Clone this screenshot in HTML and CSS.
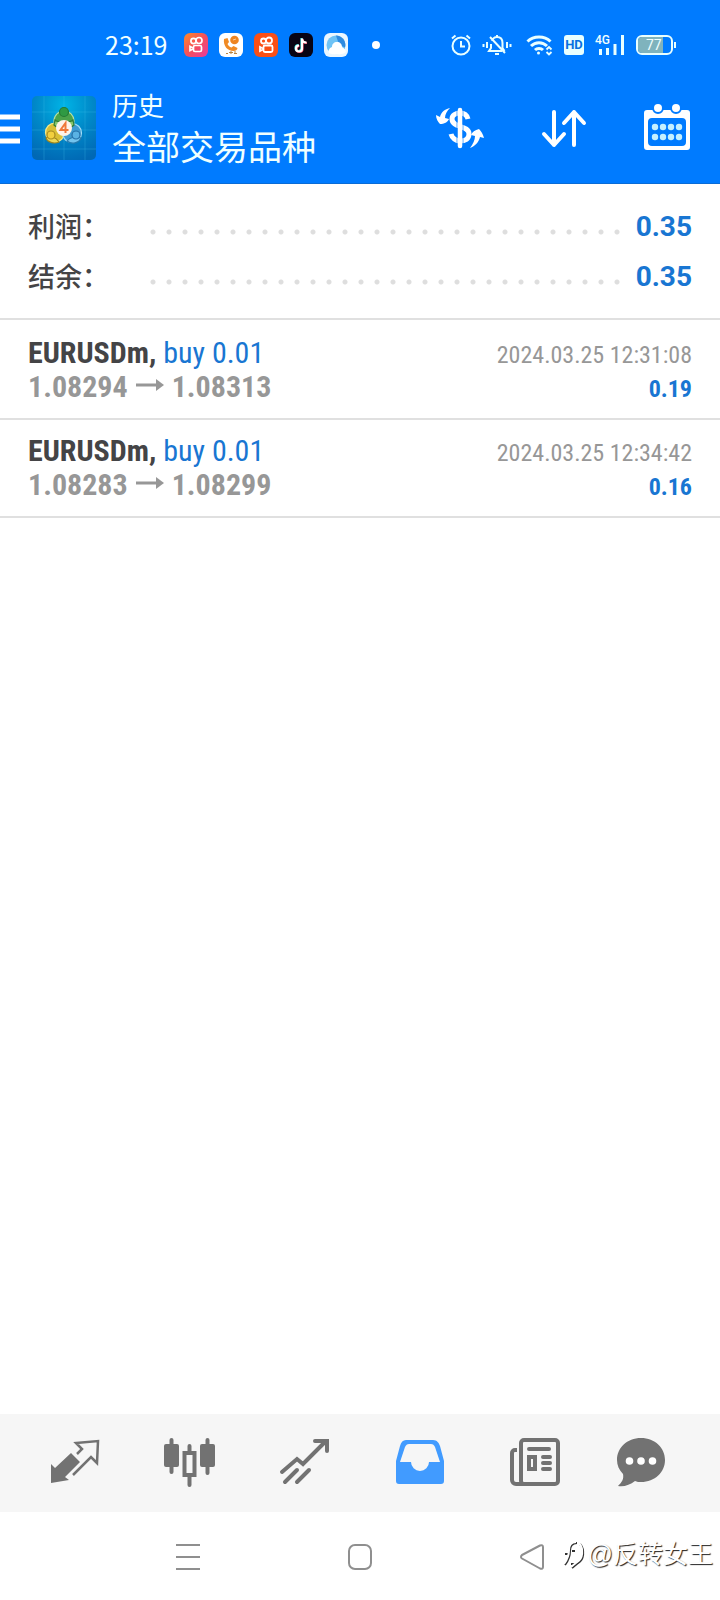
FILE: index.html
```html
<!DOCTYPE html>
<html lang="zh-CN">
<head>
<meta charset="utf-8">
<meta name="viewport" content="width=device-width, initial-scale=1">
<title>历史</title>
<link rel="stylesheet" href="styles.css">
</head>
<body>
<div class="screen">
  <div class="top">
    <div class="status">
      <span class="clock">23:19</span>
      <div class="status-apps">
        <svg width="24" height="24" viewBox="0 0 24 24"><defs><linearGradient id="ks" x1="0" y1="0" x2="1" y2="1"><stop offset="0" stop-color="#ff8a2a"/><stop offset=".5" stop-color="#f5505a"/><stop offset="1" stop-color="#e83aa0"/></linearGradient></defs><rect width="24" height="24" rx="6" fill="url(#ks)"/><g fill="none" stroke="#fff" stroke-width="1.700"><circle cx="9.500" cy="8" r="2.600"/><circle cx="15" cy="7.500" r="3"/><rect x="9.500" y="12.500" width="8" height="6" rx="1.500"/><path d="M9 15l-3-1.500v4L9 16"/></g></svg>
        <svg width="24" height="24" viewBox="0 0 24 24"><rect width="24" height="24" rx="6" fill="#fff"/><circle cx="15.500" cy="7" r="4.300" fill="#ee8420"/><path d="M5 6l3.500-1 1.500 4-1.500 2c1 2 2 3 4 3.500l2-1.500 4 2c0 2-2 3-4 3-6 0-10.500-5-9.500-12z" fill="#f08a24"/><path d="M14 7l3-1" stroke="#fbd0a0"/><path d="M7 20.500h2M10 19.500h4M15 20.500h3M12 18v3M16 18v3" stroke="#b98544"/></svg>
        <svg width="24" height="24" viewBox="0 0 24 24"><rect width="24" height="24" rx="6" fill="#fa4f16"/><g fill="none" stroke="#fff" stroke-width="1.800"><circle cx="9.500" cy="8" r="2.500"/><circle cx="15" cy="7.500" r="3"/><rect x="9.500" y="12.500" width="9" height="6.500" rx="1.500"/><path d="M9 15.500l-3-1.500v4L9 16.500"/></g></svg>
        <svg width="24" height="24" viewBox="0 0 24 24"><rect width="24" height="24" rx="6" fill="#080414"/><g fill="none" stroke-width="2.200"><path d="M12.500 5v10a3 3 0 1 1-3-3" stroke="#35e0e0"/><path d="M13.500 6v10a3 3 0 1 1-3-3M13.500 6c0 3 2 4 4.500 4" stroke="#ef4560"/><path d="M13 5.500v10a3 3 0 1 1-3-3M13 5.500c0 2.500 2 4 4.500 4" stroke="#fff"/></g></svg>
        <svg width="24" height="24" viewBox="0 0 24 24"><rect width="24" height="24" rx="6" fill="#eaf6ff"/><circle cx="12" cy="12" r="9.500" fill="#6fc3f5"/><path d="M12 2.500a9.500 9.500 0 0 1 9 12l-6-3z" fill="#2f8be0"/><path d="M5 20c-1-2 0-5 3-6 0-3 2-5 5-5 3 0 5 2 5 5 2 1 4 3 4 5-4 3-12 4-17 1z" fill="#fff"/></svg>
        <svg class="more-dot" width="8" height="8" viewBox="0 0 8 8"><circle cx="4" cy="4" r="4" fill="#fff"/></svg>
      </div>
      <div class="status-system">
        <svg width="20" height="22" viewBox="0 0 20 22" fill="none" stroke="#e8ffff" stroke-width="2"><circle cx="10" cy="12" r="8.500"/><path d="M10 7v5.500h4M1 4.500L4.500 1.500M19 4.500L15.500 1.500"/></svg>
        <svg class="bell" width="30" height="22" viewBox="0 0 30 22" fill="none" stroke="#e8ffff" stroke-width="2"><path d="M10 7c1-3 3-4 5-4 3.500 0 5.500 2.500 5.500 6v5l2 3M9 10v4l-2 3h13M13 20h4M8 3l15 16M15 1v2M5 8v6M1.500 10v3M25 8v6M28.500 10v3"/></svg>
        <svg class="wifi" width="27" height="22" viewBox="0 0 27 22" fill="none" stroke="#e8ffff" stroke-width="3"><path d="M1.500 7.500c6-6 17-6 23 0M5 12c4.500-4.500 11.500-4.500 16 0M9 16c2-2 6-2 8 0"/><circle cx="12.500" cy="19" r="1.500" fill="#e8ffff" stroke="none"/><path d="M20.500 15.500l2.500-2.500 2.500 2.500M20.500 18l2.500 2.500 2.500-2.500" stroke-width="1.800"/></svg>
        <span class="hd">HD</span>
        <span class="signal"><span class="network">4G</span><svg width="30" height="22" viewBox="0 0 30 22" stroke="#e8ffff" stroke-width="3"><path d="M5.500 21v-6M12.500 21v-7M20 21V10M27.500 21V1"/></svg></span>
        <span class="battery"><span class="battery-level">77</span></span>
      </div>
    </div>
    <header class="appbar">
      <button class="menu" aria-label="菜单"><svg width="20" height="32" viewBox="0 0 20 32" stroke="#fff" stroke-width="5"><path d="M0 5h20M0 17h20M0 29h20"/></svg></button>
      <svg class="logo" width="64" height="64" viewBox="0 0 64 64"><defs><radialGradient id="bg" cx=".5" cy=".15" r=".9"><stop offset="0" stop-color="#00b4e6"/><stop offset=".5" stop-color="#0088c8"/><stop offset="1" stop-color="#0068b4"/></radialGradient></defs><rect width="64" height="64" rx="5" fill="url(#bg)"/><path d="M12 0v64M32 0v64M53 0v64M0 16h64M0 34h64M0 53h64" stroke="#4cc8ee" stroke-opacity=".25"/><g stroke-width="1.200"><circle cx="32" cy="25" r="10" fill="#4ba34a" stroke="#b7dfa0"/><circle cx="23" cy="36.500" r="9.500" fill="#d9bf35" stroke="#f4e889"/><circle cx="40" cy="37" r="9.500" fill="#3e9bd2" stroke="#a5dcf5"/><path d="M23 24c3 3 15 3 18 0l1 5c-4 4-16 4-20 0z" fill="#86c66c" stroke="#317d37"/><path d="M14 42c4-3 10-1 13 4-4 2-11 1-13-4z" fill="#efd956" stroke="#9c841f"/><path d="M35 45c3-4 9-5 14-3-2 5-9 7-14 3z" fill="#73c4ee" stroke="#2678ac"/><circle cx="32" cy="16" r="4.500" fill="#2f9a43" stroke="#257a34"/><circle cx="19" cy="39" r="4" fill="#f2cf3e" stroke="#a88a20"/><circle cx="44" cy="39" r="4" fill="#5ab2e4" stroke="#246fa8"/></g><circle cx="32" cy="32" r="8" fill="#fff3e8"/><path d="M33.500 37v-10l-5 7h8" fill="none" stroke="#f07838" stroke-width="2"/></svg>
      <div class="titles">
        <h1 class="title">历史</h1>
        <p class="subtitle">全部交易品种</p>
      </div>
      <div class="actions">
        <button aria-label="货币"><svg width="50" height="44" viewBox="0 0 50 44" fill="none" stroke="#fff"><path d="M33 13c-1-4-4-6-8-6s-8 2-8 6c0 9 17 6 17 15 0 5-4 7-9 7-4 0-8-3-9-7" stroke-width="5"/><path d="M25 2v40" stroke="#007bff" stroke-width="8" opacity=".35"/><path d="M25 4v36" stroke-width="4.500" stroke-linecap="round"/><path d="M15 2C10 3 6 6 5 11L1 9c0 4 2 7 4 9 4 0 8-2 9-5l-4-1c0-4 2-7 5-10zM35 42c5-2 9-6 10-11l4 1c-1-4-3-7-5-9-4 1-7 3-8 6l4 1c0 4-2 8-5 12z" fill="#fff" stroke="none"/></svg></button>
        <button aria-label="排序"><svg width="46" height="40" viewBox="0 0 46 40" fill="none" stroke="#fff" stroke-width="4" stroke-linecap="round" stroke-linejoin="round"><path d="M13 4v33M3 26l10 11 10-11M33 37V4M23 15L33 4l10 11"/></svg></button>
        <button aria-label="日期"><svg width="48" height="50" viewBox="0 0 48 50"><path fill-rule="evenodd" d="M3 7h40a3 3 0 0 1 3 3v34a3 3 0 0 1-3 3H3a3 3 0 0 1-3-3V10a3 3 0 0 1 3-3zM8 15a4 4 0 0 0-4 4v20a4 4 0 0 0 4 4h30a4 4 0 0 0 4-4V19a4 4 0 0 0-4-4z" fill="#fff"/><g fill="#fff" stroke="#007bff" stroke-width="2"><circle cx="14" cy="5" r="5"/><circle cx="32" cy="5" r="5"/></g><g fill="#c5f0ff"><circle cx="11" cy="24" r="3.200"/><circle cx="19" cy="24" r="3.200"/><circle cx="27" cy="24" r="3.200"/><circle cx="35" cy="24" r="3.200"/><circle cx="11" cy="34" r="3.200"/><circle cx="19" cy="34" r="3.200"/><circle cx="27" cy="34" r="3.200"/><circle cx="35" cy="34" r="3.200"/></g></svg></button>
      </div>
    </header>
  </div>

  <main class="content">
    <dl class="summary">
      <div class="summary-row"><dt>利润：</dt><dd>0.35</dd></div>
      <div class="summary-row"><dt>结余：</dt><dd>0.35</dd></div>
    </dl>
    <ul class="deals">
      <li class="deal">
        <div class="line"><span class="symbol">EURUSDm, <span class="side">buy 0.01</span></span><time class="time">2024.03.25 12:31:08</time></div>
        <div class="line"><span class="prices">1.08294<svg class="arrow" width="28" height="12" viewBox="0 0 28 12"><path d="M0 6h22" stroke="#979797" stroke-width="3"/><path d="M20 0l8 6-8 6z" fill="#979797"/></svg>1.08313</span><span class="profit">0.19</span></div>
      </li>
      <li class="deal">
        <div class="line"><span class="symbol">EURUSDm, <span class="side">buy 0.01</span></span><time class="time">2024.03.25 12:34:42</time></div>
        <div class="line"><span class="prices">1.08283<svg class="arrow" width="28" height="12" viewBox="0 0 28 12"><path d="M0 6h22" stroke="#979797" stroke-width="3"/><path d="M20 0l8 6-8 6z" fill="#979797"/></svg>1.08299</span><span class="profit">0.16</span></div>
      </li>
    </ul>
  </main>

  <nav class="tabs">
    <button aria-label="行情"><svg width="52" height="52" viewBox="0 0 52 52"><path d="M3 27l4 4 16-15 9 9-15 15 4 3-18 3z" fill="#727272"/><path d="M29 17l5-5-6-6 22-2-1 22-6-6-18 18" fill="none" stroke="#727272" stroke-width="2.500"/></svg></button>
    <button aria-label="图表"><svg width="52" height="52" viewBox="0 0 52 52" fill="#727272"><rect x="1" y="7" width="15" height="23" rx="2"/><rect x="37" y="7" width="15" height="23" rx="2"/><path d="M8.500 3v32M44.500 3v33M26.500 9v6M26.500 39v9" stroke="#727272" stroke-width="4" stroke-linecap="round"/><rect x="21.500" y="16" width="10" height="22" fill="#f6f6f6" stroke="#727272" stroke-width="4"/></svg></button>
    <button aria-label="交易"><svg width="52" height="52" viewBox="0 0 52 52" fill="none" stroke="#727272" stroke-width="4" stroke-linecap="round"><path d="M4 35l15-13 6 5L47 5M37 4h12v10M7 45l12-12M19 45l12-12"/></svg></button>
    <button aria-label="历史" aria-current="page"><svg width="52" height="52" viewBox="0 0 52 52"><path fill-rule="evenodd" d="M13 3h27c4 0 6 3 7 6l4 15v20a3 3 0 0 1-3 3H6a3 3 0 0 1-3-3V24L7 9c1-4 3-6 6-6zM16 7c-2 0-3 1-4 3L7 25h11a9 9 0 0 0 18 0h11L42 10c-1-2-2-3-4-3z" fill="#419bff"/></svg></button>
    <button aria-label="新闻"><svg width="52" height="52" viewBox="0 0 52 52" fill="none" stroke="#727272" stroke-width="4"><rect x="13" y="3" width="37" height="44" rx="3"/><path d="M9 13H7a3 3 0 0 0-3 3v27a4 4 0 0 0 4 4h8"/><path d="M21 12h20M35 20h7M35 26h7M35 32h7" stroke-linecap="round"/><rect x="21" y="20" width="6" height="12"/></svg></button>
    <button aria-label="消息"><svg width="68" height="52" viewBox="0 0 68 52"><path d="M26 1c14 0 24 10 24 22S40 45 26 45c-2 0-4 0-6-1-5 4-11 6-17 5 4-4 6-7 5-12C4 33 2 28 2 23 2 11 12 1 26 1z" fill="#727272"/><g fill="#fff"><circle cx="14.500" cy="24" r="3.800"/><circle cx="26" cy="24" r="3.800"/><circle cx="37.500" cy="24" r="3.800"/></g></svg></button>
  </nav>

  <footer class="system-nav">
    <button aria-label="最近任务"><svg width="26" height="28" viewBox="0 0 26 28" stroke="#8f8f8f" stroke-width="2"><path d="M1 3h24M1 15h24M1 27h24"/></svg></button>
    <button aria-label="主屏幕"><svg width="26" height="28" viewBox="0 0 26 28" fill="none" stroke="#8f8f8f" stroke-width="2"><rect x="2" y="3" width="22" height="24" rx="6"/></svg></button>
    <button aria-label="返回"><svg width="26" height="28" viewBox="0 0 26 28" fill="none" stroke="#8f8f8f" stroke-width="2" stroke-linejoin="round"><path d="M3 13L21 3.500q3-1 3 1.500v20q0 2.500-3 1.500L3 16.500q-2-1.500 0-3.500z"/></svg></button>
    <p class="watermark"><svg width="24" height="32" viewBox="0 0 24 32" fill="none" stroke-width="2"><g stroke="#333"><path d="M3 27c3-4 5-9 5-14 0-4 2-8 7-8M3 16h5M10 13h3M9 26h4M18 6c5 6 4 16-2 19l-6 5"/></g><g stroke="#fff"><path d="M2 26c3-4 5-9 5-14 0-4 2-8 7-8M17 5c5 6 4 16-2 19l-6 5"/></g></svg>@反转女王</p>
  </footer>
</div>
</body>
</html>
```

FILE: styles.css
```css
* { box-sizing: border-box; }

body, h1, p, dl, dd, ul { margin: 0; padding: 0; }

body {
  background: #fff;
  color: #444446;
  font-family: Roboto, "Noto Sans CJK SC", sans-serif;
}

button {
  display: flex;
  align-items: center;
  justify-content: center;
  padding: 0;
  border: 0;
  background: none;
}

svg { display: block; flex: none; }

.screen {
  display: flex;
  flex-direction: column;
  min-height: 100vh;
}

.top {
  background: #007bff;
  border-bottom: 1px solid #0a6cd6;
  color: #f0ffff;
}

.status {
  display: flex;
  align-items: center;
  height: 80px;
  padding: 10px 44px 0 105px;
}

.clock {
  padding-bottom: 2px;
  font: 25px/30px "Noto Sans CJK SC", sans-serif;
}

.status-apps {
  display: flex;
  align-items: center;
  gap: 11px;
  margin-left: 17px;
}

.more-dot { margin-left: 13px; }

.status-system {
  display: flex;
  align-items: center;
  gap: 11px;
  margin-left: auto;
}

.wifi { margin-left: 3px; }

.hd {
  width: 20px;
  border-radius: 3px;
  background: #e8ffff;
  color: #0870e0;
  font-size: 13px;
  font-weight: 700;
  line-height: 20px;
  text-align: center;
}

.signal { position: relative; }

.network {
  position: absolute;
  top: -1px;
  left: 0;
  font-size: 12px;
  font-weight: 500;
  line-height: 14px;
}

.battery {
  position: relative;
  width: 37px;
  height: 20px;
  margin-right: 3px;
  border: 2px solid #e8ffff;
  border-radius: 6px;
}

.battery::after {
  content: "";
  position: absolute;
  top: 5px;
  right: -5px;
  width: 2px;
  height: 6px;
  background: #e8ffff;
}

.battery-level {
  display: block;
  width: 77%;
  height: 16px;
  padding-left: 8px;
  border-radius: 4px 0 0 4px;
  background: #7fb3bd;
  font-size: 14px;
  line-height: 16px;
}

.appbar {
  display: flex;
  align-items: center;
  height: 103px;
  padding-bottom: 7px;
}

.menu { width: 20px; margin-right: 12px; }

.titles { margin-left: 16px; padding-top: 2px; }

.title {
  font-size: 26px;
  font-weight: 400;
  line-height: 38px;
}

.subtitle {
  font-size: 34px;
  line-height: 44px;
}

.actions {
  display: flex;
  margin-left: auto;
}

.actions button { width: 104px; height: 64px; }

.content { flex: 1; }

.summary {
  padding: 17px 28px;
  border-bottom: 2px solid #e0e0e0;
  font-size: 28px;
  line-height: 50px;
}

.summary-row { display: flex; }

.summary-row::before {
  content: "";
  order: 1;
  flex: 1;
  align-self: center;
  height: 6px;
  margin: 12px 12px 0 0;
  background: radial-gradient(circle, #dedede 2px, transparent 3px) 0 0 / 16px 6px repeat-x;
}

.summary dt {
  width: 117px;
  font-family: "Noto Sans CJK SC", sans-serif;
  font-size: 27px;
  font-weight: 500;
}

.summary dd {
  order: 2;
  color: #1976d2;
  font-weight: 700;
  line-height: 52px;
  height: 50px;
}

.deals {
  padding-top: 2px;
  list-style: none;
  font-family: "Roboto Condensed", "Liberation Sans Narrow", Roboto, sans-serif;
  font-size: 30px;
  line-height: 34px;
}

.deal {
  padding: 14px 28px;
  border-bottom: 2px solid #e0e0e0;
}

.line {
  display: flex;
  align-items: baseline;
  justify-content: space-between;
  height: 34px;
}

.symbol { font-weight: 700; }

.side { color: #1976d2; font-weight: 400; }

.prices { color: #979797; font-weight: 700; }

.arrow { display: inline-block; margin: 0 8px 6px; vertical-align: baseline; }

.time { color: #979797; font-size: 24px; }

.profit { color: #1976d2; font-size: 24px; font-weight: 700; }

.tabs {
  display: flex;
  height: 98px;
  padding: 0 14px 0 16px;
  background: #f6f6f6;
}

.tabs button { flex: 1; }

.system-nav {
  position: relative;
  display: flex;
  height: 88px;
  padding: 0 102px;
}

.system-nav button { flex: 1; }

.watermark {
  position: absolute;
  right: 7px;
  bottom: 27px;
  display: flex;
  align-items: center;
  gap: 2px;
  color: #fff;
  font: 25px/38px "Liberation Sans", "Noto Sans CJK SC", sans-serif;
  text-shadow: 1px 1px 1px #222;
}
```
